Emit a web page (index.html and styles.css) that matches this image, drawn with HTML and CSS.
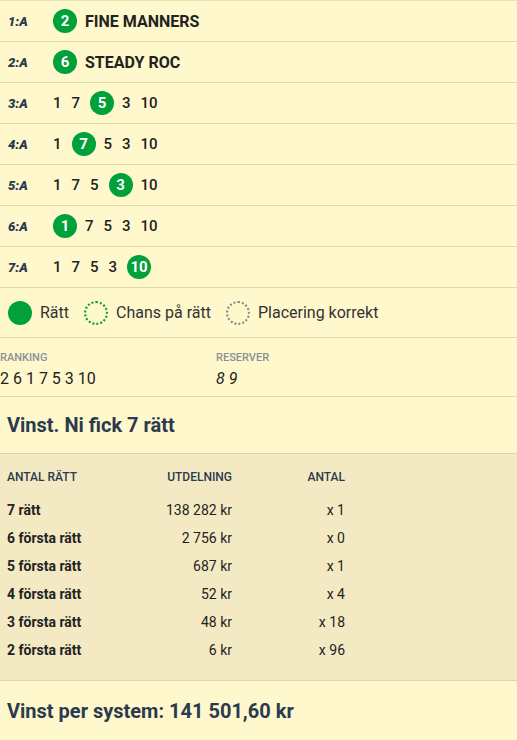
FILE: index.html
```html
<!DOCTYPE html>
<html lang="sv">
<head>
  <meta charset="UTF-8">
  <title>Rätta system</title>
  <link rel="stylesheet" href="styles.css">
</head>
<body>

  <div class="avdelningar">
    <div class="avd">
      <span class="avd-nr">1:A</span>
      <span class="nr ratt">2</span>
      <span class="hast">FINE MANNERS</span>
    </div>
    <div class="avd">
      <span class="avd-nr">2:A</span>
      <span class="nr ratt">6</span>
      <span class="hast">STEADY ROC</span>
    </div>
    <div class="avd">
      <span class="avd-nr">3:A</span>
      <span class="nr">1</span><span class="nr">7</span><span class="nr ratt">5</span><span class="nr">3</span><span class="nr">10</span>
    </div>
    <div class="avd">
      <span class="avd-nr">4:A</span>
      <span class="nr">1</span><span class="nr ratt">7</span><span class="nr">5</span><span class="nr">3</span><span class="nr">10</span>
    </div>
    <div class="avd">
      <span class="avd-nr">5:A</span>
      <span class="nr">1</span><span class="nr">7</span><span class="nr">5</span><span class="nr ratt">3</span><span class="nr">10</span>
    </div>
    <div class="avd">
      <span class="avd-nr">6:A</span>
      <span class="nr ratt">1</span><span class="nr">7</span><span class="nr">5</span><span class="nr">3</span><span class="nr">10</span>
    </div>
    <div class="avd">
      <span class="avd-nr">7:A</span>
      <span class="nr">1</span><span class="nr">7</span><span class="nr">5</span><span class="nr">3</span><span class="nr ratt">10</span>
    </div>
  </div>

  <div class="legend">
    <span class="prick fylld"></span><span class="legend-text">Rätt</span>
    <span class="prick chans"></span><span class="legend-text">Chans på rätt</span>
    <span class="prick placering"></span><span class="legend-text">Placering korrekt</span>
  </div>

  <div class="ranking">
    <div class="rank-col">
      <div class="rank-label">RANKING</div>
      <div class="rank-value">2 6 1 7 5 3 10</div>
    </div>
    <div class="rank-col">
      <div class="rank-label">RESERVER</div>
      <div class="rank-value reserv">8 9</div>
    </div>
  </div>

  <h2 class="vinst">Vinst. Ni fick 7 rätt</h2>

  <div class="utdelning">
    <div class="u-rad u-head">
      <span>ANTAL RÄTT</span><span class="hoger">UTDELNING</span><span class="hoger">ANTAL</span>
    </div>
    <div class="u-rad"><b>7 rätt</b><span class="hoger">138 282 kr</span><span class="hoger">x 1</span></div>
    <div class="u-rad"><b>6 första rätt</b><span class="hoger">2 756 kr</span><span class="hoger">x 0</span></div>
    <div class="u-rad"><b>5 första rätt</b><span class="hoger">687 kr</span><span class="hoger">x 1</span></div>
    <div class="u-rad"><b>4 första rätt</b><span class="hoger">52 kr</span><span class="hoger">x 4</span></div>
    <div class="u-rad"><b>3 första rätt</b><span class="hoger">48 kr</span><span class="hoger">x 18</span></div>
    <div class="u-rad"><b>2 första rätt</b><span class="hoger">6 kr</span><span class="hoger">x 96</span></div>
  </div>

  <h2 class="vinst total">Vinst per system: 141 501,60 kr</h2>

</body>
</html>
```

FILE: styles.css
```css
* { box-sizing: border-box; }

body {
  margin: 0;
  font-family: Roboto, 'Liberation Sans', Arial, sans-serif;
  background: #fff8cc;
  color: #222;
}

.avdelningar {
  border-top: 1px solid #e9e0b4;
}

.avd {
  display: flex;
  align-items: center;
  height: 41px;
  padding-left: 8px;
  border-bottom: 1px solid #e3d9aa;
}

.avd-nr {
  width: 45px;
  font-size: 13px;
  font-weight: 900;
  font-style: italic;
  color: #2b3a4e;
}

.nr {
  font-size: 15px;
  font-weight: 500;
  margin-right: 10px;
  color: #222;
}

.nr.ratt {
  display: inline-flex;
  align-items: center;
  justify-content: center;
  width: 24px;
  height: 24px;
  border-radius: 50%;
  background: #00a03b;
  color: #fff;
  font-weight: 700;
  margin-right: 8px;
}

.hast {
  font-size: 16px;
  font-weight: 700;
  color: #222;
}

.legend {
  display: flex;
  align-items: center;
  height: 50px;
  padding-left: 8px;
  border-bottom: 1px solid #e3d9aa;
}

.prick {
  width: 24px;
  height: 24px;
  border-radius: 50%;
  margin-right: 8px;
}

.prick.fylld { background: #00a03b; }
.prick.chans { border: 2px dotted #00a03b; }
.prick.placering { border: 2px dotted #8a8a8a; }

.legend-text {
  font-size: 16px;
  color: #333;
  margin-right: 15px;
}

.ranking {
  display: flex;
  height: 59px;
  padding-top: 13px;
  border-bottom: 1px solid #e3d9aa;
}

.rank-col {
  width: 216px;
}

.rank-label {
  font-size: 11px;
  font-weight: 500;
  color: #8b8f96;
  line-height: 14px;
}

.rank-value {
  font-size: 16px;
  line-height: 22px;
  margin-top: 3px;
}

.rank-value.reserv {
  font-style: italic;
}

.vinst {
  margin: 0;
  padding: 0 7px;
  height: 57px;
  line-height: 56px;
  font-size: 20px;
  font-weight: 700;
  color: #2b3a4e;
  border-bottom: 1px solid #e0d5a4;
}

.utdelning {
  background: #f3eac3;
  padding: 9px 7px 16px;
  border-bottom: 1px solid #e0d5a4;
}

.u-rad {
  display: grid;
  grid-template-columns: 120px 105px 113px;
  height: 28px;
  align-items: center;
  font-size: 14px;
  color: #222;
}

.u-rad b { font-weight: 700; }

.u-head {
  font-size: 12px;
  font-weight: 500;
  color: #2b3a4e;
  margin-bottom: 5px;
}

.hoger { text-align: right; }

.total {
  height: 59px;
  line-height: 60px;
  border-bottom: none;
}
```
